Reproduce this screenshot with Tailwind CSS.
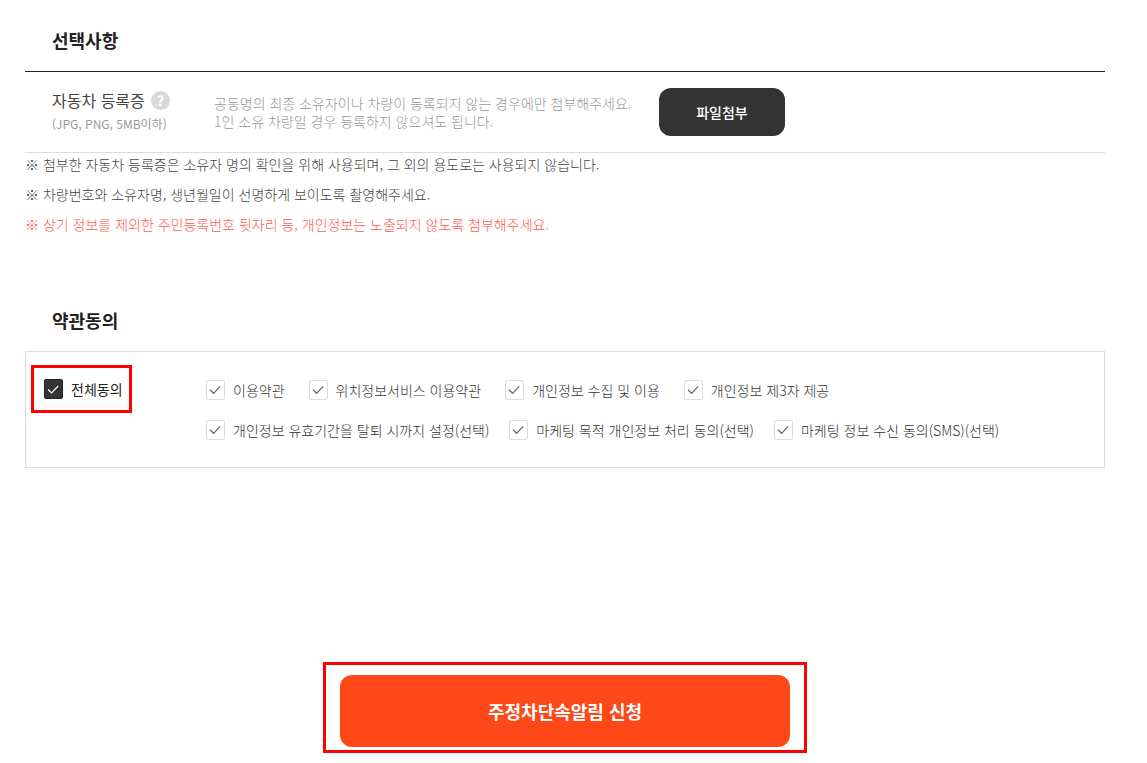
<!DOCTYPE html>
<html lang="ko">
<head>
<meta charset="utf-8">
<meta name="viewport" content="width=device-width, initial-scale=1">
<title>주정차단속알림 신청</title>
<script src="https://cdn.jsdelivr.net/npm/@tailwindcss/browser@4"></script>
</head>
<body class="bg-white pl-[25px] pr-[42px] font-['Noto_Sans_CJK_KR',sans-serif] text-sm text-[#333]">
<main>
  <section>
    <h2 class="pt-[27px] pb-[18px] pl-[27px] text-lg leading-[26px] font-bold text-[#222]">선택사항</h2>
    <div class="flex h-[82px] items-center border-t border-b border-t-[#222] border-b-[#ddd] pl-[27px]">
      <div class="w-[162px]">
        <div class="flex items-center gap-1.5">
          <span class="text-base leading-6 text-[#444]">자동차 등록증</span>
          <button type="button" aria-label="도움말" class="flex size-[19px] items-center justify-center rounded-full bg-[#d9d9d9] text-sm leading-none font-bold text-white">?</button>
        </div>
        <p class="text-xs leading-6 text-[#999]">(JPG, PNG, 5MB이하)</p>
      </div>
      <p class="w-[445px] leading-[18px] font-light text-[#999]">공동명의 최종 소유자이나 차량이 등록되지 않는 경우에만 첨부해주세요.<br>1인 소유 차량일 경우 등록하지 않으셔도 됩니다.</p>
      <button type="button" class="h-12 w-[126px] rounded-xl bg-[#333] font-medium text-white">파일첨부</button>
    </div>
    <ul class="leading-[22px] font-light text-[#444]">
      <li class="pb-2">※ 첨부한 자동차 등록증은 소유자 명의 확인을 위해 사용되며, 그 외의 용도로는 사용되지 않습니다.</li>
      <li class="pb-2">※ 차량번호와 소유자명, 생년월일이 선명하게 보이도록 촬영해주세요.</li>
      <li class="text-[#ff5a4f]">※ 상기 정보를 제외한 주민등록번호 뒷자리 등, 개인정보는 노출되지 않도록 첨부해주세요.</li>
    </ul>
  </section>

  <section class="pt-[72px]">
    <h2 class="pb-[18px] pl-[27px] text-lg leading-[26px] font-bold text-[#222]">약관동의</h2>
    <div class="flex items-start border border-[#ddd] pt-[13px] pb-[27px] pl-[5px]">
      <label class="flex h-12 w-[101px] shrink-0 items-center gap-2 border-3 border-[#f00] pl-2.5 text-[#222]">
        <span class="grid">
          <input type="checkbox" checked class="col-start-1 row-start-1 h-5 w-[19px] appearance-none rounded-xs border border-[#222] bg-[#333]">
          <svg class="pointer-events-none col-start-1 row-start-1 h-5 w-[19px]" viewBox="0 0 19 20" fill="none" stroke="#fff" stroke-width="1.1"><path d="M4 10.5 7.6 14 14.2 7"/></svg>
        </span>
        <span>전체동의</span>
      </label>
      <div class="ml-[74px] flex flex-col gap-5 pt-[15px] leading-5 font-light text-[#333]">
        <div class="flex gap-6">
          <label class="flex items-center gap-2"><span class="grid"><input type="checkbox" checked class="col-start-1 row-start-1 h-5 w-[19px] appearance-none rounded-xs border border-[#ddd] bg-white"><svg class="pointer-events-none col-start-1 row-start-1 h-5 w-[19px]" viewBox="0 0 19 20" fill="none" stroke="#666" stroke-width="1.2"><path d="M4 9.8 7.6 13.3 14.2 6.3"/></svg></span><span>이용약관</span></label>
          <label class="flex items-center gap-2"><span class="grid"><input type="checkbox" checked class="col-start-1 row-start-1 h-5 w-[19px] appearance-none rounded-xs border border-[#ddd] bg-white"><svg class="pointer-events-none col-start-1 row-start-1 h-5 w-[19px]" viewBox="0 0 19 20" fill="none" stroke="#666" stroke-width="1.2"><path d="M4 9.8 7.6 13.3 14.2 6.3"/></svg></span><span>위치정보서비스 이용약관</span></label>
          <label class="flex items-center gap-2"><span class="grid"><input type="checkbox" checked class="col-start-1 row-start-1 h-5 w-[19px] appearance-none rounded-xs border border-[#ddd] bg-white"><svg class="pointer-events-none col-start-1 row-start-1 h-5 w-[19px]" viewBox="0 0 19 20" fill="none" stroke="#666" stroke-width="1.2"><path d="M4 9.8 7.6 13.3 14.2 6.3"/></svg></span><span>개인정보 수집 및 이용</span></label>
          <label class="flex items-center gap-2"><span class="grid"><input type="checkbox" checked class="col-start-1 row-start-1 h-5 w-[19px] appearance-none rounded-xs border border-[#ddd] bg-white"><svg class="pointer-events-none col-start-1 row-start-1 h-5 w-[19px]" viewBox="0 0 19 20" fill="none" stroke="#666" stroke-width="1.2"><path d="M4 9.8 7.6 13.3 14.2 6.3"/></svg></span><span>개인정보 제3자 제공</span></label>
        </div>
        <div class="flex gap-5">
          <label class="flex items-center gap-2"><span class="grid"><input type="checkbox" checked class="col-start-1 row-start-1 h-5 w-[19px] appearance-none rounded-xs border border-[#ddd] bg-white"><svg class="pointer-events-none col-start-1 row-start-1 h-5 w-[19px]" viewBox="0 0 19 20" fill="none" stroke="#666" stroke-width="1.2"><path d="M4 9.8 7.6 13.3 14.2 6.3"/></svg></span><span>개인정보 유효기간을 탈퇴 시까지 설정(선택)</span></label>
          <label class="flex items-center gap-2"><span class="grid"><input type="checkbox" checked class="col-start-1 row-start-1 h-5 w-[19px] appearance-none rounded-xs border border-[#ddd] bg-white"><svg class="pointer-events-none col-start-1 row-start-1 h-5 w-[19px]" viewBox="0 0 19 20" fill="none" stroke="#666" stroke-width="1.2"><path d="M4 9.8 7.6 13.3 14.2 6.3"/></svg></span><span>마케팅 목적 개인정보 처리 동의(선택)</span></label>
          <label class="flex items-center gap-2"><span class="grid"><input type="checkbox" checked class="col-start-1 row-start-1 h-5 w-[19px] appearance-none rounded-xs border border-[#ddd] bg-white"><svg class="pointer-events-none col-start-1 row-start-1 h-5 w-[19px]" viewBox="0 0 19 20" fill="none" stroke="#666" stroke-width="1.2"><path d="M4 9.8 7.6 13.3 14.2 6.3"/></svg></span><span>마케팅 정보 수신 동의(SMS)(선택)</span></label>
        </div>
      </div>
    </div>
  </section>

  <div class="mx-auto mt-[194px] w-full max-w-[484px] border-3 border-[#f00] px-3.5 pt-2.5 pb-[3px]">
    <button type="submit" class="h-[72px] w-full rounded-xl bg-[#ff4817] text-lg font-bold text-white">주정차단속알림 신청</button>
  </div>
</main>
</body>
</html>
